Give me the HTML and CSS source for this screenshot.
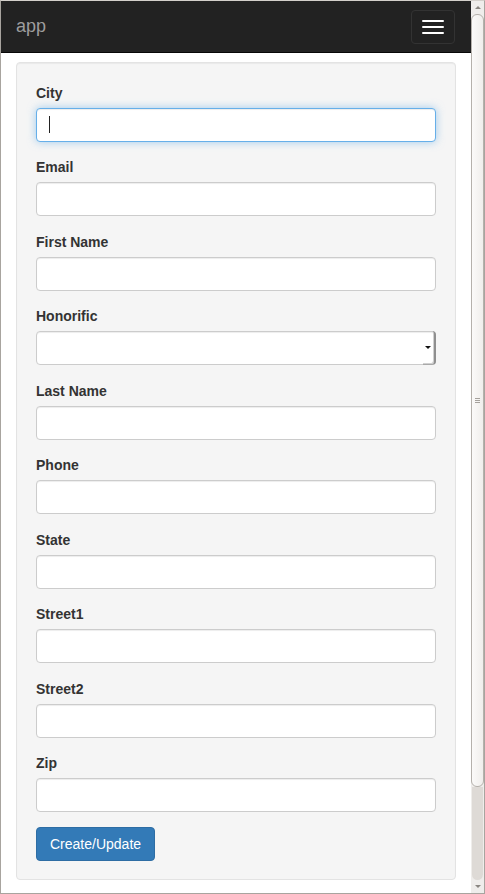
FILE: index.html
```html
<!DOCTYPE html>
<html>
<head>
<meta charset="utf-8">
<title>app</title>
<link rel="stylesheet" href="styles.css">
</head>
<body>
<div class="frame">
  <div class="viewport">
    <nav class="navbar">
      <span class="brand">app</span>
      <button class="toggle" type="button" aria-label="Toggle navigation">
        <span class="bar"></span><span class="bar"></span><span class="bar"></span>
      </button>
    </nav>
    <div class="well">
      <div class="group">
        <label class="label">City</label>
        <div class="field-wrap">
          <div class="input focus"></div>
          <span class="caret"></span>
        </div>
      </div>
      <div class="group">
        <label class="label">Email</label>
        <div class="input"></div>
      </div>
      <div class="group">
        <label class="label">First Name</label>
        <div class="input"></div>
      </div>
      <div class="group">
        <label class="label">Honorific</label>
        <div class="input select"><span class="drop"><span class="tri"></span></span></div>
      </div>
      <div class="group">
        <label class="label">Last Name</label>
        <div class="input"></div>
      </div>
      <div class="group">
        <label class="label">Phone</label>
        <div class="input"></div>
      </div>
      <div class="group">
        <label class="label">State</label>
        <div class="input"></div>
      </div>
      <div class="group">
        <label class="label">Street1</label>
        <div class="input"></div>
      </div>
      <div class="group">
        <label class="label">Street2</label>
        <div class="input"></div>
      </div>
      <div class="group">
        <label class="label">Zip</label>
        <div class="input"></div>
      </div>
      <button class="btn" type="button">Create/Update</button>
    </div>
  </div>
  <div class="scrollbar">
    <div class="sb-up"><span class="sb-tri-up"></span></div>
    <div class="sb-thumb"><span class="grip"></span><span class="grip"></span><span class="grip"></span></div>
    <div class="sb-track"></div>
    <div class="sb-down"><span class="sb-tri-down"></span></div>
  </div>
</div>
</body>
</html>
```
FILE: styles.css
```css
html, body {
  margin: 0;
  padding: 0;
  background: #fff;
}
.frame {
  width: 485px;
  height: 894px;
  box-sizing: border-box;
  border: 1px solid #a8a49f;
  border-top-color: #d4d0cb;
  display: flex;
  overflow: hidden;
  font-family: "Liberation Sans", Arial, sans-serif;
  font-size: 14px;
  color: #333;
}
.viewport {
  flex: 1;
  min-width: 0;
  overflow: hidden;
}
.navbar {
  height: 51px;
  background: #222;
  border-bottom: 1px solid #080808;
  display: flex;
  align-items: center;
  justify-content: space-between;
  padding: 0 15px;
}
.brand {
  font-size: 18px;
  line-height: 20px;
  color: #9d9d9d;
  margin-top: -1px;
}
.toggle {
  width: 44px;
  height: 34px;
  box-sizing: border-box;
  border: 1px solid #333;
  border-radius: 4px;
  background: transparent;
  padding: 0;
  display: flex;
  flex-direction: column;
  align-items: center;
  justify-content: center;
  gap: 4px;
  margin-top: 1px;
  margin-right: 1px;
}
.bar {
  display: block;
  width: 22px;
  height: 2px;
  border-radius: 1px;
  background: #fff;
}
.well {
  margin: 9px 15px 0;
  padding: 19px 19px 18px;
  background: #f5f5f5;
  border: 1px solid #e3e3e3;
  border-radius: 4px;
  box-shadow: inset 0 1px 1px rgba(0,0,0,.05);
}
.group {
  margin-bottom: 14.45px;
}
.label {
  display: block;
  font-weight: bold;
  line-height: 20px;
  margin-bottom: 6px;
  position: relative;
  top: 1px;
}
.field-wrap {
  position: relative;
}
.input {
  height: 34px;
  box-sizing: border-box;
  background: #fff;
  border: 1px solid #ccc;
  border-radius: 4px;
  box-shadow: inset 0 1px 1px rgba(0,0,0,.075);
}
.input.focus {
  border-color: #66afe9;
  box-shadow: inset 0 1px 1px rgba(0,0,0,.075), 0 0 8px rgba(102,175,233,.6);
}
.caret {
  position: absolute;
  left: 13px;
  top: 8px;
  width: 1px;
  height: 17px;
  background: #222;
}
.select {
  position: relative;
}
.drop {
  position: absolute;
  right: -1px;
  top: -1px;
  bottom: -1px;
  width: 13px;
  box-sizing: border-box;
  border-right: 2px solid #8f8f8f;
  border-bottom: 1px solid #a9a9a9;
  border-radius: 0 4px 4px 0;
  box-shadow: inset -1px -1px 0 #d0d0d0;
  display: flex;
  align-items: center;
  justify-content: center;
}
.tri {
  width: 0;
  height: 0;
  border-left: 3px solid transparent;
  border-right: 3px solid transparent;
  border-top: 3px solid #111;
  margin-left: -2px;
}
.btn {
  display: inline-block;
  height: 34px;
  box-sizing: border-box;
  padding: 6px 13px;
  margin-top: 0.5px;
  font-family: "Liberation Sans", Arial, sans-serif;
  font-size: 14px;
  line-height: 20px;
  color: #fff;
  background: #337ab7;
  border: 1px solid #2e6da4;
  border-radius: 4px;
}
.scrollbar {
  width: 13px;
  flex-shrink: 0;
  display: flex;
  flex-direction: column;
  background: #efedeb;
}
.sb-up, .sb-down {
  height: 13px;
  display: flex;
  align-items: center;
  justify-content: center;
  flex-shrink: 0;
}
.sb-tri-up {
  width: 0;
  height: 0;
  border-left: 3px solid transparent;
  border-right: 3px solid transparent;
  border-bottom: 3px solid #8a8681;
}
.sb-tri-down {
  width: 0;
  height: 0;
  border-left: 3px solid transparent;
  border-right: 3px solid transparent;
  border-top: 3px solid #8a8681;
}
.sb-thumb {
  height: 773px;
  box-sizing: border-box;
  border: 1px solid #b5b1ac;
  border-radius: 6px;
  background: linear-gradient(to right, #fbfaf9, #f0eeec);
  display: flex;
  flex-direction: column;
  align-items: center;
  justify-content: center;
  gap: 1px;
}
.grip {
  display: block;
  width: 5px;
  height: 1px;
  background: #a5a19c;
}
.sb-track {
  flex: 1;
  background: #dedad6;
  border-radius: 0 0 6px 6px;
  margin: 0 1px;
}
```
